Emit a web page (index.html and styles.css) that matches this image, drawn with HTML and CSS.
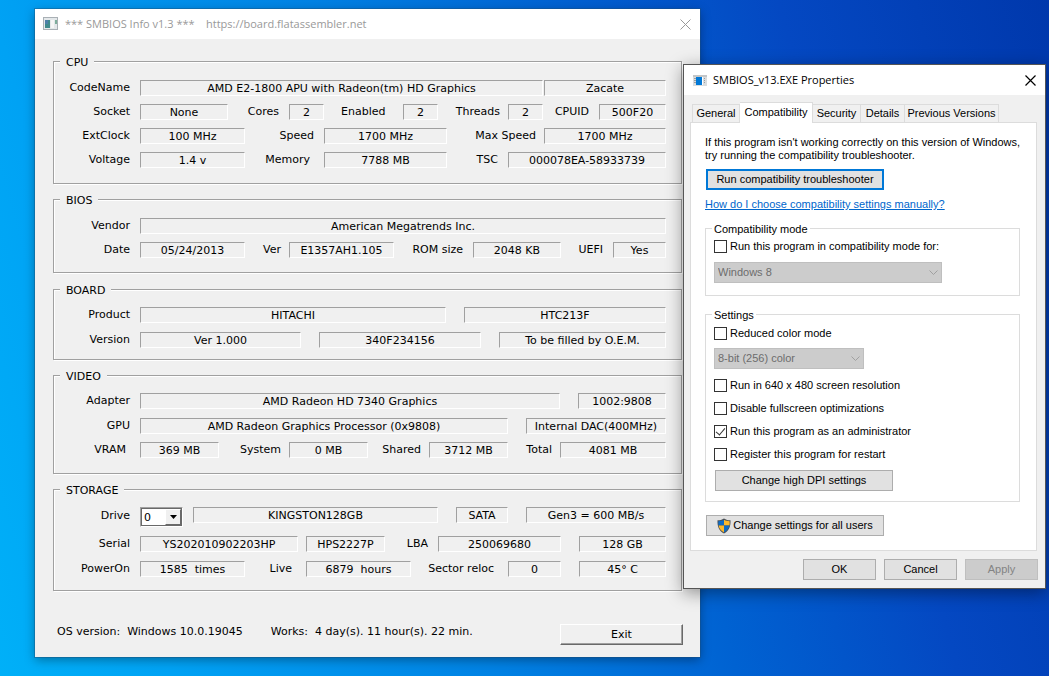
FILE: index.html
```html
<!DOCTYPE html>
<html lang="en">
<head>
    <meta charset="UTF-8">
    <meta name="viewport" content="width=device-width, initial-scale=1.0">
    <title>SMBIOS Info</title>
    <link rel="stylesheet" href="styles.css">
</head>
<body>
    <main class="window info-window">
        <header class="title-bar">
            <svg class="app-icon" width="16" height="14" viewBox="0 0 16 14">
                <rect x="0.5" y="0.5" width="14" height="12" fill="#e4e8ea" stroke="#a9b0b5"/>
                <rect x="2" y="3" width="5" height="8" fill="#3f8a8c"/>
                <rect x="2" y="3" width="3" height="4" fill="#4d7fa8"/>
                <rect x="8" y="3" width="3" height="8" fill="#f6f6f6"/>
                <rect x="12" y="3" width="2" height="4" fill="#7fae9c"/>
            </svg>
            <h1 class="title">*** SMBIOS Info v1.3 ***    https://board.flatassembler.net</h1>
            <button class="close-button" aria-label="Close">
                <svg width="11" height="11" viewBox="0 0 11 11"><path d="M0.5 0.5L10.5 10.5M10.5 0.5L0.5 10.5" fill="none" stroke="currentColor"/></svg>
            </button>
        </header>

        <div class="info-body">
            <fieldset class="group group-cpu">
                <legend>CPU</legend>
                <div class="row row-codename">
                    <span class="label">CodeName</span><output class="field">AMD E2-1800 APU with Radeon(tm) HD Graphics</output><output class="field">Zacate</output>
                </div>
                <div class="row row-socket">
                    <span class="label">Socket</span><output class="field">None</output>
                    <span class="label">Cores</span><output class="field">2</output>
                    <span class="label wide">Enabled&nbsp;</span><output class="field">2</output>
                    <span class="label tight">Threads</span><output class="field">2</output>
                    <span class="label">CPUID</span><output class="field">500F20</output>
                </div>
                <div class="row row-clock">
                    <span class="label">ExtClock</span><output class="field">100 MHz</output>
                    <span class="label">Speed</span><output class="field">1700 MHz</output>
                    <span class="label tight">Max Speed</span><output class="field">1700 MHz</output>
                </div>
                <div class="row row-voltage">
                    <span class="label">Voltage</span><output class="field">1.4 v</output>
                    <span class="label wide">Memory</span><output class="field">7788 MB</output>
                    <span class="label">TSC</span><output class="field">000078EA-58933739</output>
                </div>
            </fieldset>

            <fieldset class="group group-bios">
                <legend>BIOS</legend>
                <div class="row row-vendor">
                    <span class="label">Vendor</span><output class="field">American Megatrends Inc.</output>
                </div>
                <div class="row row-date">
                    <span class="label">Date</span><output class="field">05/24/2013</output>
                    <span class="label tight">Ver</span><output class="field">E1357AH1.105</output>
                    <span class="label">ROM size</span><output class="field">2048 KB</output>
                    <span class="label">UEFI</span><output class="field">Yes</output>
                </div>
            </fieldset>

            <fieldset class="group group-board">
                <legend>BOARD</legend>
                <div class="row row-product">
                    <span class="label">Product</span><output class="field">HITACHI</output><output class="field">HTC213F</output>
                </div>
                <div class="row row-version">
                    <span class="label">Version</span><output class="field">Ver 1.000</output><output class="field">340F234156</output><output class="field">To be filled by O.E.M.</output>
                </div>
            </fieldset>

            <fieldset class="group group-video">
                <legend>VIDEO</legend>
                <div class="row row-adapter">
                    <span class="label">Adapter</span><output class="field">AMD Radeon HD 7340 Graphics</output><output class="field">1002:9808</output>
                </div>
                <div class="row row-gpu">
                    <span class="label">GPU</span><output class="field">AMD Radeon Graphics Processor (0x9808)</output><output class="field">Internal DAC(400MHz)</output>
                </div>
                <div class="row row-vram">
                    <span class="label wide">VRAM</span><output class="field">369 MB</output>
                    <span class="label tight">System</span><output class="field">0 MB</output>
                    <span class="label tight">Shared</span><output class="field">3712 MB</output>
                    <span class="label tight">Total</span><output class="field">4081 MB</output>
                </div>
            </fieldset>

            <fieldset class="group group-storage">
                <legend>STORAGE</legend>
                <div class="row row-drive">
                    <label class="label" for="drive">Drive</label>
                    <span class="drive-box">
                        <select id="drive">
                            <option>0</option>
                        </select>
                        <span class="drive-arrow"><svg width="7" height="4" viewBox="0 0 7 4"><path d="M0 0H7L3.5 4Z"/></svg></span>
                    </span>
                    <output class="field">KINGSTON128GB</output><output class="field">SATA</output><output class="field">Gen3 = 600 MB/s</output>
                </div>
                <div class="row row-serial">
                    <span class="label">Serial</span><output class="field">YS202010902203HP</output><output class="field">HPS2227P</output>
                    <span class="label">LBA</span><output class="field">250069680</output><output class="field">128 GB</output>
                </div>
                <div class="row row-power">
                    <span class="label">PowerOn</span><output class="field">1585  times</output>
                    <span class="label wide">Live</span><output class="field">6879  hours</output>
                    <span class="label wide">Sector reloc</span><output class="field">0</output><output class="field">45° C</output>
                </div>
            </fieldset>

            <footer class="status">
                <span class="status-os">OS version:  Windows 10.0.19045</span>
                <span class="status-works">Works:  4 day(s). 11 hour(s). 22 min.</span>
                <button class="exit-button">Exit</button>
            </footer>
        </div>
    </main>

    <section class="window props-window">
        <header class="title-bar">
            <svg class="app-icon" width="14" height="11" viewBox="0 0 14 11">
                <rect width="14" height="11" fill="#d9dcde"/>
                <path d="M0 0H14V2H0Z" fill="#c3c6c8"/>
                <path d="M1 3.5H3M1 5.5H3M1 7.5H3M11 3.5H12M11 5.5H12M11 7.5H12" stroke="#9a9da0"/>
                <rect x="3" y="2" width="6" height="8" fill="#0078d7"/>
                <rect x="9" y="2" width="1" height="8" fill="#fff"/>
            </svg>
            <h2 class="title">SMBIOS_v13.EXE Properties</h2>
            <button class="close-button" aria-label="Close">
                <svg width="11" height="11" viewBox="0 0 11 11"><path d="M0.5 0.5L10.5 10.5M10.5 0.5L0.5 10.5" fill="none" stroke="currentColor" stroke-width="1.2"/></svg>
            </button>
        </header>

        <div class="props-body">
            <div class="tabs" role="tablist">
                <button class="tab tab-general" role="tab">General</button>
                <button class="tab tab-compat active" role="tab" aria-selected="true">Compatibility</button>
                <button class="tab tab-security" role="tab">Security</button>
                <button class="tab tab-details" role="tab">Details</button>
                <button class="tab tab-versions" role="tab">Previous Versions</button>
            </div>

            <div class="panel" role="tabpanel">
                <p class="intro">If this program isn't working correctly on this version of Windows,<br>try running the compatibility troubleshooter.</p>
                <button class="button long primary">Run compatibility troubleshooter</button>
                <a class="help-link" href="#">How do I choose compatibility settings manually?</a>

                <fieldset class="box box-mode">
                    <legend>Compatibility mode</legend>
                    <label class="check"><input type="checkbox">Run this program in compatibility mode for:</label>
                    <span class="combo combo-mode">
                        <select disabled aria-label="Compatibility mode">
                            <option>Windows 8</option>
                        </select>
                        <svg width="9" height="6" viewBox="0 0 9 6"><path d="M0.5 0.5L4.5 4.5L8.5 0.5" fill="none" stroke="#a0a0a0"/></svg>
                    </span>
                </fieldset>

                <fieldset class="box box-settings">
                    <legend>Settings</legend>
                    <label class="check"><input type="checkbox">Reduced color mode</label>
                    <span class="combo combo-color">
                        <select disabled aria-label="Color mode">
                            <option>8-bit (256) color</option>
                        </select>
                        <svg width="9" height="6" viewBox="0 0 9 6"><path d="M0.5 0.5L4.5 4.5L8.5 0.5" fill="none" stroke="#a0a0a0"/></svg>
                    </span>
                    <div class="check-list">
                        <label class="check"><input type="checkbox">Run in 640 x 480 screen resolution</label>
                        <label class="check"><input type="checkbox">Disable fullscreen optimizations</label>
                        <label class="check"><input type="checkbox" checked>Run this program as an administrator</label>
                        <label class="check"><input type="checkbox">Register this program for restart</label>
                    </div>
                    <button class="button long">Change high DPI settings</button>
                </fieldset>

                <button class="button long all-users">
                    <svg width="14" height="16" viewBox="0 0 14 16">
                        <path d="M7 0.5C9 1.8 11 2.3 13.5 2.3C13.8 8.5 12 13 7 15.5C2 13 0.2 8.5 0.5 2.3C3 2.3 5 1.8 7 0.5Z" fill="#4a4f55"/>
                        <path d="M7 1.8V7.5H1.5C1.3 6 1.3 4.6 1.4 3.3C3.4 3.2 5.2 2.8 7 1.8Z" fill="#0f6cc4"/>
                        <path d="M7 1.8V7.5H12.5C12.7 6 12.7 4.6 12.6 3.3C10.6 3.2 8.8 2.8 7 1.8Z" fill="#fdb92b"/>
                        <path d="M1.6 7.5H7V14.4C4 12.9 2.1 10.6 1.6 7.5Z" fill="#fdb92b"/>
                        <path d="M12.4 7.5H7V14.4C10 12.9 11.9 10.6 12.4 7.5Z" fill="#0f6cc4"/>
                    </svg>
                    Change settings for all users
                </button>
            </div>

            <div class="dialog-buttons">
                <button class="button">OK</button>
                <button class="button">Cancel</button>
                <button class="button" disabled>Apply</button>
            </div>
        </div>
    </section>
</body>
</html>
```
FILE: styles.css
```css
* {
    box-sizing: border-box;
}

body {
    margin: 0;
    min-height: 100vh;
    position: relative;
    overflow: hidden;
    color: #000;
    background: linear-gradient(75deg, #00b0f8 0%, #00a2f4 14%, #0082e4 40%, #0062d2 60%, #0448c2 78%, #0038ac 100%);
}

button, select, input {
    font: inherit;
    color: inherit;
    margin: 0;
}

fieldset {
    margin: 0;
    min-width: 0;
}

/* Windows */

.window {
    position: absolute;
    background: #f0f0f0;
}

.info-window {
    left: 35px;
    top: 9px;
    width: 665px;
    box-shadow: 0 0 0 1px rgba(30, 80, 120, 0.4), 0 3px 10px rgba(0, 0, 0, 0.35);
    font: 11px/16px "DejaVu Sans", Verdana, sans-serif;
}

.props-window {
    left: 683px;
    top: 64px;
    width: 363px;
    border: 1px solid #555;
    box-shadow: 0 4px 16px rgba(0, 0, 0, 0.4);
    font: 11px/13px "Liberation Sans", Arial, sans-serif;
}

.title-bar {
    display: flex;
    align-items: center;
    height: 30px;
    padding: 0 9px 0 8px;
    background: #fff;
}

.info-window .title-bar {
    color: #999;
}

.props-window .title-bar {
    padding-left: 9px;
}

.title {
    flex: 1;
    margin: 0 0 0 6px;
    font: 11px/16px "Open Sans", "Segoe UI", sans-serif;
    white-space: pre;
}

.close-button {
    display: flex;
    padding: 0;
    border: none;
    background: none;
}

/* SMBIOS info */

.info-body {
    padding: 16px 17px 12px 18px;
}

.group {
    padding: 12px 15px 15px 6px;
    border: 1px solid #a0a0a0;
    box-shadow: 1px 1px 0 #fff, inset 1px 1px 0 #fff;
    display: grid;
    row-gap: 8px;
    margin: 0 1px 9px 0;
}

.group legend {
    height: 13px;
    line-height: 15px;
    padding: 0 6px;
    background: #f0f0f0;
}

.group-bios {
    padding-bottom: 14px;
    margin-bottom: 10px;
}

.group-board {
    padding-top: 11px;
    padding-bottom: 11px;
    row-gap: 9px;
}

.group-video {
    padding-top: 11px;
    padding-bottom: 15px;
}

.group-video .row-adapter {
    margin-bottom: 1px;
}

.group-storage {
    padding-top: 11px;
    padding-bottom: 13px;
    row-gap: 9px;
    margin-bottom: 0;
}

.row {
    display: grid;
    align-items: start;
}

.row-codename { grid-template-columns: 80px 403px 1fr; }
.row-socket { grid-template-columns: 80px 88px 61px 35px 79px 35px 70px 35px 56px 1fr; }
.row-clock { grid-template-columns: 80px 105px 79px 123px 97px 1fr; }
.row-voltage { grid-template-columns: 80px 105px 79px 123px 61px 1fr; }
.row-vendor { grid-template-columns: 80px 1fr; }
.row-date { grid-template-columns: 80px 105px 44px 105px 79px 88px 52px 1fr; }
.row-product { grid-template-columns: 80px 306px 1fr; }
.row-version { grid-template-columns: 80px 161px 180px 1fr; }
.row-adapter { grid-template-columns: 80px 420px 1fr; }
.row-gpu { grid-template-columns: 80px 368px 1fr; }
.row-vram { grid-template-columns: 80px 79px 70px 79px 61px 79px 52px 1fr; }
.row-drive { grid-template-columns: 80px 43px 255px 70px 1fr; }
.row-serial { grid-template-columns: 80px 158px 87px 53px 123px 1fr; }
.row-power { grid-template-columns: 80px 105px 61px 105px 97px 53px 1fr; }

.label {
    padding-right: 10px;
    text-align: right;
    white-space: nowrap;
}

.label.tight {
    padding-right: 8px;
}

.label.wide {
    padding-right: 14px;
}

.field {
    display: block;
    height: 16px;
    border: 1px solid;
    border-color: #a0a0a0 #fff #fff #a0a0a0;
    text-align: center;
    white-space: pre;
}

.field + .field,
.drive-box + .field {
    margin-left: 18px;
}

.row-codename .field + .field {
    margin-left: 1px;
}

.row-serial .field + .field {
    margin-left: 8px;
}

.row-serial .field:last-child {
    margin-left: 18px;
}

.row-drive .label {
    padding-top: 1px;
}

.row-drive .drive-box + .field {
    margin-left: 10px;
}

.drive-box {
    position: relative;
    height: 20px;
    border: 1px solid;
    border-color: #a0a0a0 #fff #fff #a0a0a0;
}

.drive-box select {
    display: block;
    width: 100%;
    height: 18px;
    padding: 1px 2px 0;
    border: 1px solid #696969;
    border-radius: 0;
    background: #fff;
    appearance: none;
}

.drive-arrow {
    position: absolute;
    top: 1px;
    right: 1px;
    bottom: 1px;
    width: 16px;
    display: flex;
    align-items: center;
    justify-content: center;
    background: #f0f0f0;
    border: 1px solid;
    border-color: #fff #696969 #696969 #fff;
    pointer-events: none;
}

.status {
    display: flex;
    align-items: flex-start;
    margin-top: 33px;
    padding-left: 4px;
    white-space: pre;
}

.status-works {
    margin-left: 28px;
}

.exit-button {
    width: 123px;
    height: 21px;
    margin-left: auto;
    padding: 0;
    border: 1px solid;
    border-color: #fff #696969 #696969 #fff;
    box-shadow: inset -1px -1px 0 #a0a0a0;
    background: #f0f0f0;
}

/* Properties dialog */

.props-body {
    padding: 7px 7px 8px 6px;
}

.tabs {
    display: flex;
    align-items: flex-end;
    padding-left: 2px;
}

.tab {
    height: 18px;
    padding: 0;
    border: 1px solid #dcdcdc;
    border-width: 1px 1px 0 0;
    background: #f0f0f0;
    white-space: nowrap;
}

.tab-general {
    width: 48px;
    border-left-width: 1px;
}

.tab-compat { width: 73px; }
.tab-security { width: 48px; }
.tab-details { width: 44px; }
.tab-versions { width: 94px; }

/* the selected tab covers the top line of the panel */
.tab.active {
    position: relative;
    height: 21px;
    margin-bottom: -1px;
    padding-bottom: 2px;
    background: #fff;
}

.panel {
    display: flex;
    flex-direction: column;
    align-items: flex-start;
    margin-right: 1px;
    padding: 13px 16px 14px 14px;
    border: 1px solid #dcdcdc;
    background: #fff;
}

.intro {
    margin: 0 0 7px;
    white-space: nowrap;
}

.button {
    width: 73px;
    height: 21px;
    padding: 0;
    border: 1px solid #adadad;
    background: #e1e1e1;
    white-space: nowrap;
}

.button.long {
    width: 178px;
    margin-left: 1px;
}

.button.primary {
    border: 2px solid #0078d7;
}

.button:disabled {
    border-color: #bfbfbf;
    background: #ccc;
    color: #838383;
}

.help-link {
    margin: 8px 0 11px;
    color: #0066cc;
}

.box {
    align-self: stretch;
    display: flex;
    flex-direction: column;
    align-items: flex-start;
    padding: 5px 8px 12px;
    border: 1px solid #dcdcdc;
}

.box legend {
    height: 13px;
    line-height: 15px;
    margin-left: -2px;
    padding: 0 2px;
}

.box-mode {
    margin-bottom: 12px;
}

.box-settings {
    padding: 6px 8px 10px;
    margin-bottom: 13px;
}

.check {
    display: flex;
    align-items: center;
    gap: 3px;
    height: 13px;
    line-height: 15px;
    white-space: nowrap;
}

.check input {
    display: grid;
    place-items: center;
    width: 13px;
    height: 13px;
    border: 1px solid #333;
    background: #fff;
    appearance: none;
}

.check input:checked::after {
    content: "";
    width: 4px;
    height: 8px;
    margin-bottom: 2px;
    border: solid #333;
    border-width: 0 1px 1px 0;
    transform: rotate(40deg);
}

.check-list {
    display: grid;
    gap: 10px;
    margin: 10px 0 9px;
}

.combo {
    position: relative;
    margin-top: 9px;
}

.combo-mode {
    width: 228px;
}

.combo-color {
    width: 150px;
    margin-top: 8px;
}

.combo select {
    display: block;
    width: 100%;
    height: 21px;
    padding: 0 3px;
    border: 1px solid #bfbfbf;
    border-radius: 0;
    background: #ccc;
    color: #6d6d6d;
    opacity: 1;
    appearance: none;
}

.combo svg {
    position: absolute;
    top: 8px;
    right: 4px;
}

.all-users {
    display: flex;
    align-items: center;
    justify-content: center;
    gap: 2px;
}

.dialog-buttons {
    display: flex;
    justify-content: flex-end;
    gap: 8px;
    margin-top: 8px;
}
```
